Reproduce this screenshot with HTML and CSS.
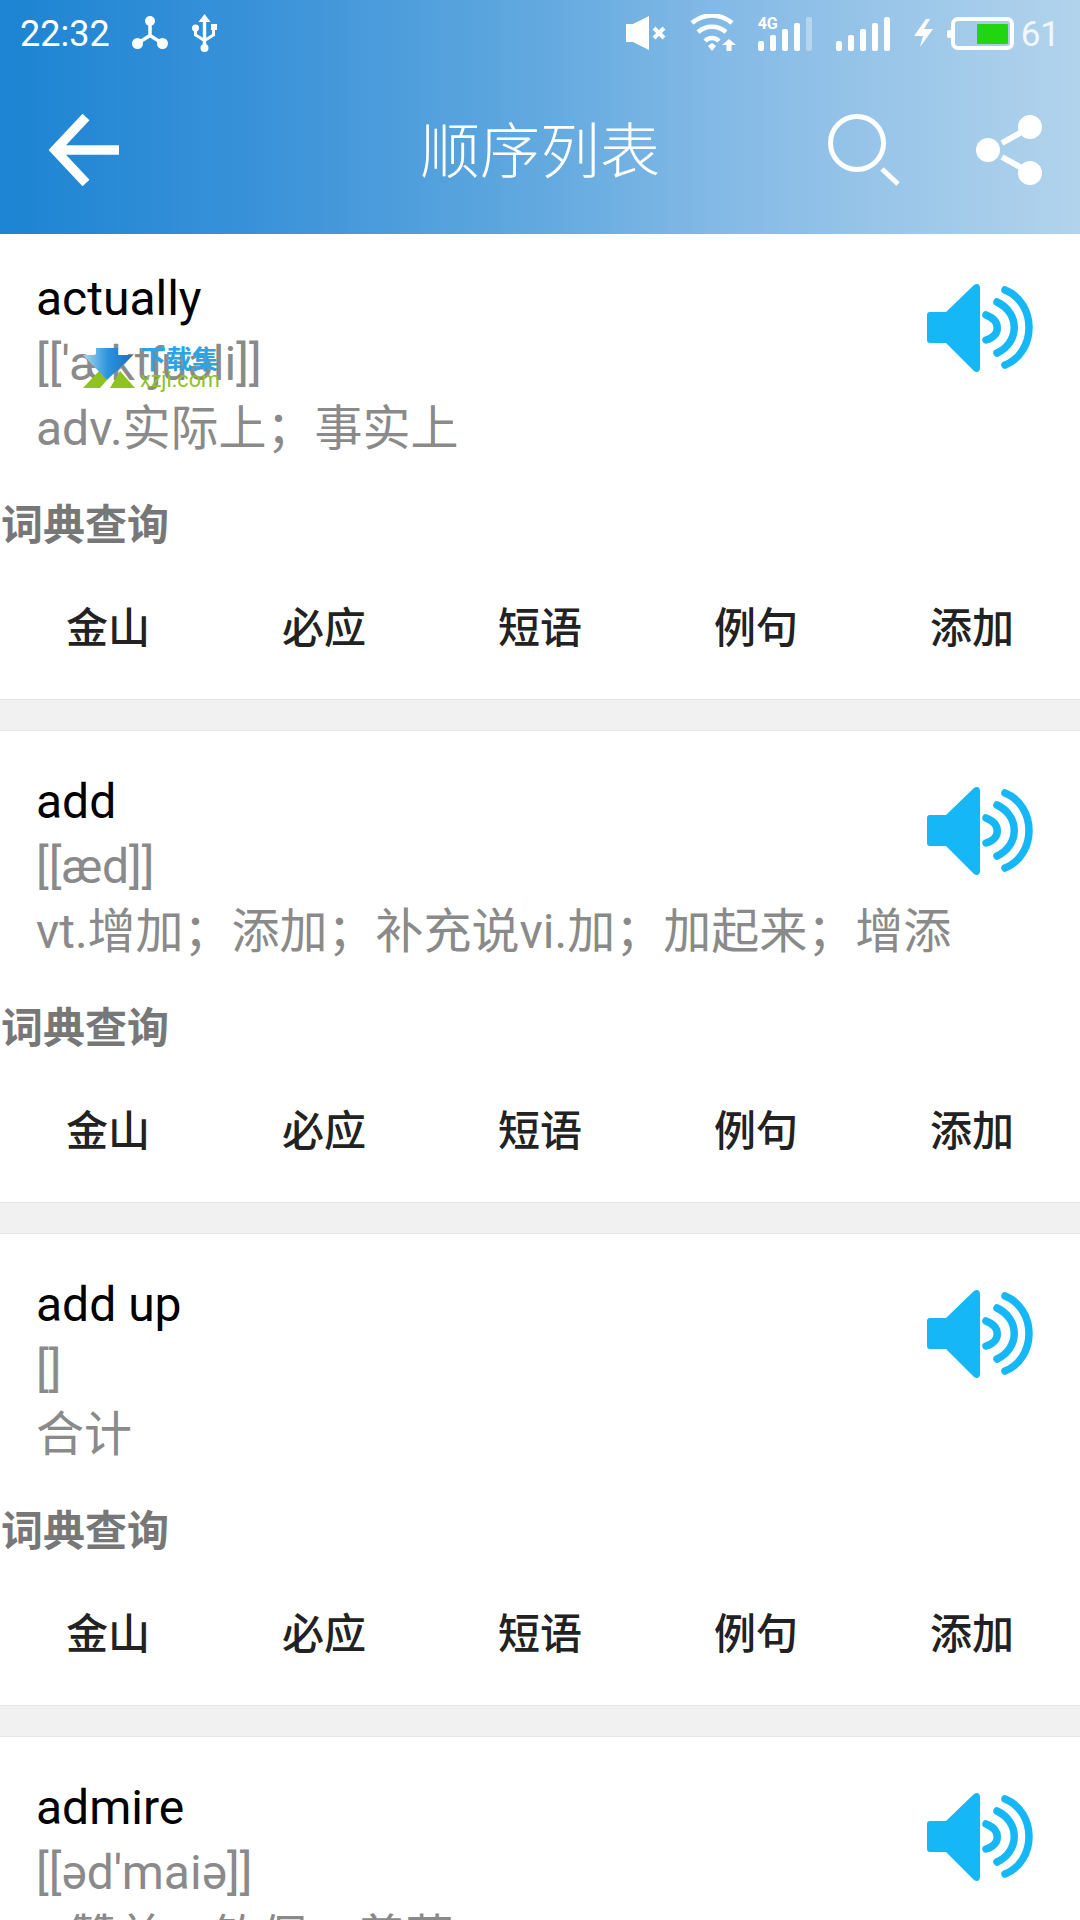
FILE: index.html
```html
<!DOCTYPE html>
<html lang="zh-CN">
<head>
    <meta charset="UTF-8">
    <title>顺序列表</title>
    <link rel="stylesheet" href="styles.css">
</head>
<body>
    <svg class="defs" width="0" height="0">
        <symbol id="speaker" viewBox="0 0 106 90">
            <path d="M3 29H19L47 2c3-2 6-1 6 3V85c0 4-3 5-6 3L19 60H3c-2 0-3-1-3-3V32c0-2 1-3 3-3z"/>
            <path class="wave" d="M59 32C74 38 74 52 59 57M70 19C93 30 93 59 70 70M78 7C110 20 110 69 78 82"/>
        </symbol>
        <linearGradient id="logo-blue" x1="0" y1="0" x2="1" y2="0">
            <stop offset="0" stop-color="#a5d8f2"/>
            <stop offset="0.5" stop-color="#2b93dc"/>
            <stop offset="1" stop-color="#1a6fc4"/>
        </linearGradient>
    </svg>

    <header class="top">
        <div class="status">
            <div class="status-left">
                <span class="time">22:32</span>
                <svg class="ic-hub" width="36" height="34" viewBox="0 0 36 34">
                    <circle cx="18" cy="5" r="5"/><circle cx="5.500" cy="27.500" r="5.500"/><circle cx="30.500" cy="27.500" r="5.500"/>
                    <path d="M18 8v11.500L6 27M18 19.500L30 27" fill="none" stroke="#fff" stroke-width="3.500"/>
                </svg>
                <svg class="ic-usb" width="25" height="38" viewBox="0 0 25 38">
                    <path d="M12.500 0l6 8h-4.300v24h-3.400V8H6.500z"/>
                    <circle cx="12.500" cy="34" r="4"/><circle cx="3.500" cy="14" r="3.500"/>
                    <path d="M19 10h6v6h-6z"/>
                    <path d="M3.500 15v6l9 5.500 9-5.500v-6" fill="none" stroke="#fff" stroke-width="3"/>
                </svg>
            </div>
            <div class="status-right">
                <svg width="40" height="34" viewBox="0 0 40 34">
                    <path d="M0 8h7L23 0v34L7 26H0z"/>
                    <path d="M28 12l10 10M38 12L28 22" fill="none" stroke="#fff" stroke-width="4"/>
                </svg>
                <svg class="ic-wifi" width="46" height="38" viewBox="0 0 46 38">
                    <path d="M2 9C14-1 30-1 42 9M8 18c8-7 20-7 28 0M15 27c4-4 10-4 14 0" fill="none" stroke="#fff" stroke-width="4.500"/>
                    <path d="M18 32l4-3 4 3-4 5zM39 25l7 6h-4.500v6h-5v-6H32z"/>
                </svg>
                <div class="signal sim1">
                    <span class="net">4G</span>
                    <i class="b1"></i><i class="b2"></i><i class="b3"></i><i class="b4"></i><i class="b5 off"></i>
                </div>
                <div class="signal sim2">
                    <i class="b1"></i><i class="b2"></i><i class="b3"></i><i class="b4"></i><i class="b5"></i>
                </div>
                <svg class="ic-bolt" width="20" height="28" viewBox="0 0 20 28">
                    <path d="M12 0L0 17h9L6 28 19 10h-9l6-10z"/>
                </svg>
                <div class="battery"><div class="battery-fill"></div></div>
                <span class="level">61</span>
            </div>
        </div>
        <div class="toolbar">
            <svg class="back" width="72" height="72" viewBox="0 0 72 72">
                <path d="M37 3L6 36l31 33M6 36h64" fill="none" stroke="#fff" stroke-width="9.500"/>
            </svg>
            <h1>顺序列表</h1>
            <div class="actions">
                <svg class="search" width="72" height="72" viewBox="0 0 72 72">
                    <circle cx="29" cy="29" r="26.500" fill="none" stroke="#fff" stroke-width="5"/>
                    <path d="M54 55l16 15" fill="none" stroke="#fff" stroke-width="5"/>
                </svg>
                <svg class="share" width="66" height="70" viewBox="0 0 66 70">
                    <circle cx="54" cy="12" r="12"/><circle cx="12" cy="35" r="12"/><circle cx="54" cy="58" r="12"/>
                    <path d="M26 28l18-10M26 42l18 10" fill="none" stroke="#fff" stroke-width="6"/>
                </svg>
            </div>
        </div>
    </header>

    <div class="list">
        <div class="card">
            <div class="word-row">
                <div class="word-text">
                    <p class="word">actually</p>
                    <p class="phonetic">[['æktʃuəli]]</p>
                    <p class="meaning">adv.实际上；事实上</p>
                </div>
                <svg class="speaker"><use href="#speaker"/></svg>
            </div>
            <h3 class="dict-title">词典查询</h3>
            <ul class="dict-links">
                <li>金山</li><li>必应</li><li>短语</li><li>例句</li><li>添加</li>
            </ul>
            <div class="logo">
                <svg width="52" height="41" viewBox="0 0 52 41">
                    <path class="logo-g" d="M0 41l16-17 8 9-7 8zM27 41l10-17 15 17z"/>
                    <path fill="url(#logo-blue)" d="M0 8h13V1h22v7h15L24 33z"/>
                </svg>
                <div class="logo-text">
                    <span class="logo-cn">下载集</span>
                    <span class="logo-en">xzji.com</span>
                </div>
            </div>
        </div>

        <div class="card">
            <div class="word-row">
                <div class="word-text">
                    <p class="word">add</p>
                    <p class="phonetic">[[æd]]</p>
                    <p class="meaning">vt.增加；添加；补充说vi.加；加起来；增添</p>
                </div>
                <svg class="speaker"><use href="#speaker"/></svg>
            </div>
            <h3 class="dict-title">词典查询</h3>
            <ul class="dict-links">
                <li>金山</li><li>必应</li><li>短语</li><li>例句</li><li>添加</li>
            </ul>
        </div>

        <div class="card">
            <div class="word-row">
                <div class="word-text">
                    <p class="word">add up</p>
                    <p class="phonetic">[]</p>
                    <p class="meaning">合计</p>
                </div>
                <svg class="speaker"><use href="#speaker"/></svg>
            </div>
            <h3 class="dict-title">词典查询</h3>
            <ul class="dict-links">
                <li>金山</li><li>必应</li><li>短语</li><li>例句</li><li>添加</li>
            </ul>
        </div>

        <div class="card">
            <div class="word-row">
                <div class="word-text">
                    <p class="word">admire</p>
                    <p class="phonetic">[[əd'maiə]]</p>
                    <p class="meaning">v.赞美；钦佩；羡慕</p>
                </div>
                <svg class="speaker"><use href="#speaker"/></svg>
            </div>
        </div>
    </div>
</body>
</html>
```

FILE: styles.css
```css
html, body {
    margin: 0;
    padding: 0;
}
body {
    width: 1080px;
    height: 1920px;
    overflow: hidden;
    background: #f1f1f1;
    font-family: Roboto, "Noto Sans CJK SC", sans-serif;
}
p, h1, h3, ul {
    margin: 0;
    padding: 0;
}
.defs {
    position: absolute;
}
.top {
    height: 234px;
    background: linear-gradient(90deg, #1c84d3 0%, #3b93d9 25%, #62a9df 50%, #84bae6 67%, #b2d3ec 100%);
    fill: #fff;
    color: #fff;
}
.status {
    height: 66px;
    display: flex;
    justify-content: space-between;
    align-items: center;
    padding: 0 20px;
}
.status-left, .status-right {
    display: flex;
    align-items: center;
}
.time {
    font-size: 36px;
    margin-right: 22px;
    margin-top: 2px;
}
.ic-usb {
    margin-left: 24px;
}
.status-right svg {
    flex: none;
}
.ic-wifi {
    margin-left: 24px;
}
.signal {
    position: relative;
    display: flex;
    align-items: flex-end;
    gap: 6px;
    height: 34px;
    margin-top: 1px;
}
.signal i {
    display: block;
    width: 6px;
    border-radius: 2px;
    background: #fff;
}
.signal .b1 { height: 10px; }
.signal .b2 { height: 16px; }
.signal .b3 { height: 22px; }
.signal .b4 { height: 28px; }
.signal .b5 { height: 34px; }
.signal .b5.off {
    background: rgba(255, 255, 255, 0.35);
}
.signal .net {
    position: absolute;
    left: 0;
    top: -2px;
    font-size: 16px;
    line-height: 17px;
    font-weight: 700;
}
.sim1 {
    margin-left: 22px;
}
.sim2 {
    margin-left: 24px;
}
.ic-bolt {
    margin-left: 24px;
}
.battery {
    box-sizing: border-box;
    position: relative;
    width: 63px;
    height: 33px;
    margin-left: 17px;
    padding: 3px 2px 2px 22px;
    border: 4px solid #fff;
    border-radius: 7px;
}
.battery:before {
    content: "";
    position: absolute;
    left: -8px;
    top: 9px;
    width: 4px;
    height: 8px;
    background: #fff;
    border-radius: 2px 0 0 2px;
}
.battery-fill {
    height: 100%;
    background: #22d511;
    border-radius: 1px;
}
.level {
    font-size: 35px;
    margin-left: 7px;
    margin-top: 2px;
    color: #f2f7fb;
}
.toolbar {
    height: 168px;
    display: grid;
    grid-template-columns: 1fr auto 1fr;
    align-items: center;
    padding: 0 38px;
}
.back {
    margin-left: 11px;
}
.toolbar h1 {
    font-family: "Noto Sans CJK SC", sans-serif;
    font-size: 60px;
    line-height: 72px;
    font-weight: 300;
    padding-bottom: 6px;
}
.actions {
    display: flex;
    justify-content: flex-end;
    align-items: center;
}
.search {
    margin-right: 76px;
}
.card {
    position: relative;
    height: 473px;
    margin-bottom: 30px;
    background: #fff;
    border-top: 1px solid #e4e4e4;
    border-bottom: 1px solid #e4e4e4;
    box-sizing: border-box;
}
.card:first-child {
    height: 466px;
    border-top: 0;
}
.word-row {
    display: flex;
    padding: 39px 47px 0 36px;
}
.card:first-child .word-row {
    padding-top: 33px;
}
.word-text {
    flex: 1;
    width: 0;
}
.word {
    font-size: 48px;
    line-height: 64px;
    color: #000;
}
.phonetic, .meaning {
    font-size: 48px;
    line-height: 65px;
    color: #8a8a8a;
    white-space: nowrap;
}
.speaker {
    width: 106px;
    height: 90px;
    margin-top: 16px;
    fill: #16b7f7;
    flex: none;
}
.wave {
    fill: none;
    stroke: #16b7f7;
    stroke-width: 7.500;
    stroke-linecap: round;
}
.dict-title {
    font-size: 42px;
    line-height: 60px;
    color: #777;
    padding-left: 1px;
    margin-top: 35px;
}
.dict-links {
    list-style: none;
    display: flex;
    margin-top: 43px;
}
.dict-links li {
    flex: 1;
    text-align: center;
    font-size: 42px;
    line-height: 60px;
    font-weight: 500;
    color: #222;
}
.logo {
    position: absolute;
    left: 83px;
    top: 113px;
    display: flex;
    gap: 5px;
}
.logo-g {
    fill: #8dc21f;
}
.logo-text {
    display: flex;
    flex-direction: column;
    padding-top: 2px;
}
.logo-cn {
    font-size: 26px;
    line-height: 22px;
    font-weight: 700;
    color: #2ba4e6;
}
.logo-en {
    font-size: 21.500px;
    line-height: 18px;
    color: #8dc21f;
}
```
